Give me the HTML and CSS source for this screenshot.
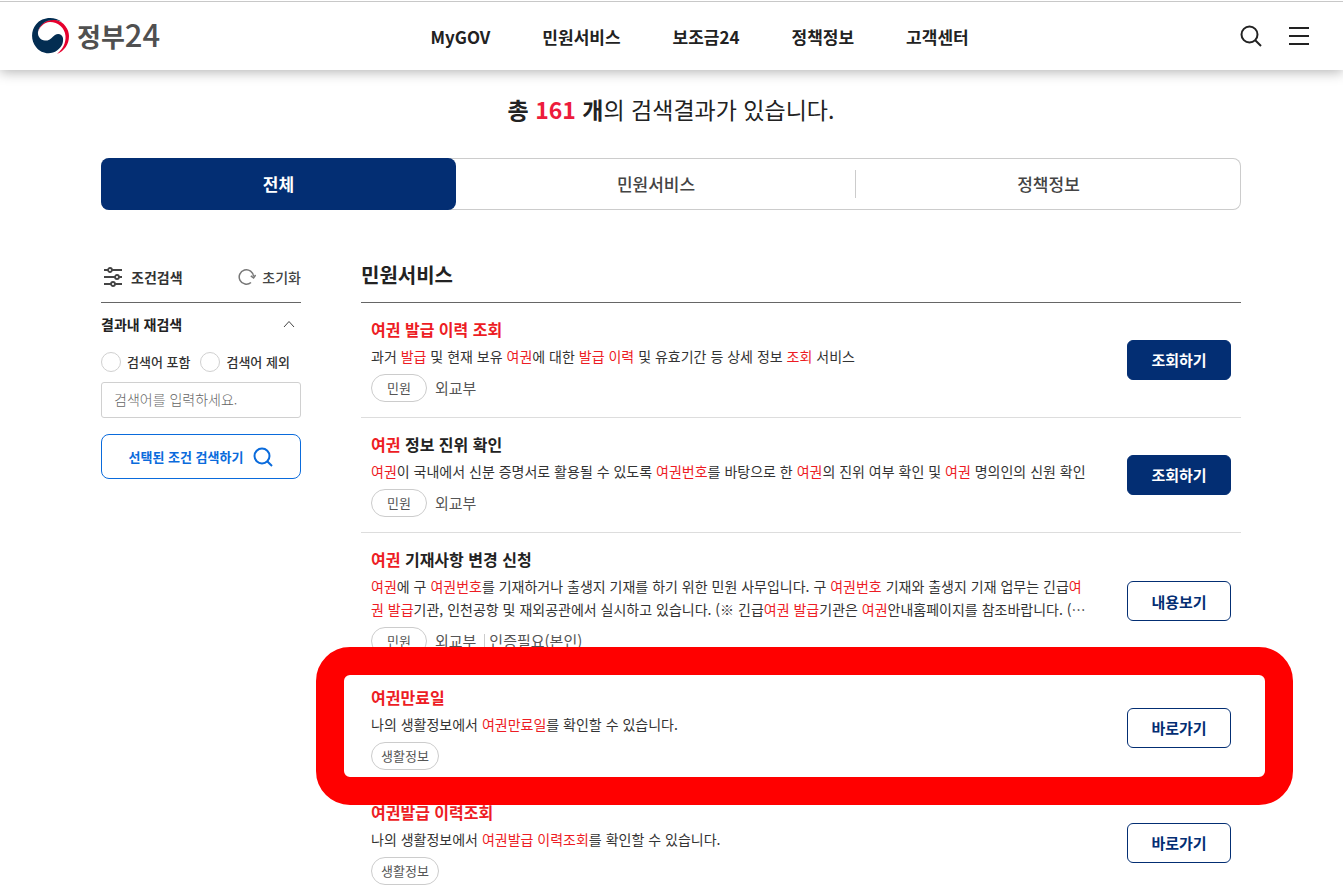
FILE: index.html
```
<!DOCTYPE html>
<html lang="ko">
<head>
    <meta charset="UTF-8">
    <meta name="viewport" content="width=device-width, initial-scale=1.0">
    <title>통합검색 | 정부24</title>
    <link rel="stylesheet" href="styles.css">
</head>
<body>
    <!-- header -->
    <header class="header">
        <a href="#" class="logo">
            <svg width="37" height="36" viewBox="0 0 37 36" aria-hidden="true">
                <path d="M6 15 C7 5 16 1 24 2 C32 4 37 11 37 18 C37 27 32 33 25 36 C31 31 34 25 33.5 18 C33 10 26 4 18 4 C12 4.5 7 9 6 15 Z" fill="#e6002d"/>
                <path d="M30 4 C22 -2 10 -1 4 6.5 C-1.5 13 -1 23 4 29 C9 36 19 37 25 32.5 C30 29 31.5 25 31 20 C30 16 26 15 23 17 C19 20 18 23 13 22.5 C8 22 5.5 18 6 14 C8 4 19 -1 30 4 Z" fill="#032d52"/>
            </svg>
            <span class="logo-text">정부<span class="logo-num">24</span></span>
        </a>
        <nav class="gnb">
            <a href="#">MyGOV</a>
            <a href="#">민원서비스</a>
            <a href="#">보조금24</a>
            <a href="#">정책정보</a>
            <a href="#">고객센터</a>
        </nav>
        <div class="util">
            <button type="button" class="icon-btn" aria-label="검색">
                <svg width="24" height="24" viewBox="0 0 24 24" fill="none" stroke="#222" stroke-width="2">
                    <circle cx="10.5" cy="10.5" r="8"/>
                    <path d="M16 16 L22 22"/>
                </svg>
            </button>
            <button type="button" class="icon-btn" aria-label="전체메뉴">
                <svg width="24" height="24" viewBox="0 0 24 24" fill="none" stroke="#222" stroke-width="2">
                    <path d="M2 4 H22 M2 12 H22 M2 20 H22"/>
                </svg>
            </button>
        </div>
    </header>

    <div class="container">
        <h1 class="result-count"><strong>총 <em>161</em> 개</strong>의 검색결과가 있습니다.</h1>

        <div class="tabs">
            <button type="button" class="tab active">전체</button>
            <button type="button" class="tab tab-service">민원서비스</button>
            <button type="button" class="tab tab-policy">정책정보</button>
        </div>

        <div class="content">
            <!-- filter -->
            <aside class="filter">
                <div class="filter-head">
                    <h2>
                        <svg width="20" height="20" viewBox="0 0 20 20" fill="none" stroke="#444" stroke-width="1.8">
                            <path d="M1 3 H5 M9 3 H19 M1 10 H12 M16 10 H19 M1 17 H8 M12 17 H19"/>
                            <circle cx="7" cy="3" r="2"/>
                            <circle cx="14" cy="10" r="2"/>
                            <circle cx="10" cy="17" r="2"/>
                        </svg>
                        조건검색
                    </h2>
                    <button type="button" class="reset">
                        <svg width="18" height="18" viewBox="0 0 18 18" fill="none" stroke="#777" stroke-width="1.5">
                            <path d="M13 14.5 A7.2 7.2 0 1 1 15.6 8.5"/>
                            <path d="M12.8 7.8 L15.6 10 L17.6 7"/>
                        </svg>
                        초기화
                    </button>
                </div>
                <button type="button" class="filter-toggle">
                    결과내 재검색
                    <svg width="12" height="8" viewBox="0 0 12 8" fill="none" stroke="#444">
                        <path d="M1 7 L6 1.5 L11 7"/>
                    </svg>
                </button>
                <div class="radios">
                    <label><input type="radio" name="again">검색어 포함</label>
                    <label><input type="radio" name="again">검색어 제외</label>
                </div>
                <input type="text" class="keyword" placeholder="검색어를 입력하세요." aria-label="검색어">
                <button type="button" class="filter-submit">
                    선택된 조건 검색하기
                    <svg width="20" height="20" viewBox="0 0 20 20" fill="none" stroke="#0a6bdc" stroke-width="2">
                        <circle cx="9" cy="9" r="7.5"/>
                        <path d="M14.2 14.2 L19 19"/>
                    </svg>
                </button>
            </aside>

            <!-- results -->
            <main class="results">
                <h2 class="results-title">민원서비스</h2>
                <ul class="list">
                    <li class="item">
                        <div class="item-body">
                            <h3><mark>여권 발급 이력 조회</mark></h3>
                            <p class="desc">과거 <mark>발급</mark> 및 현재 보유 <mark>여권</mark>에 대한 <mark>발급 이력</mark> 및 유효기간 등 상세 정보 <mark>조회</mark> 서비스</p>
                            <div class="info"><span class="tag">민원</span><span>외교부</span></div>
                        </div>
                        <button type="button" class="btn btn-fill">조회하기</button>
                    </li>
                    <li class="item">
                        <div class="item-body">
                            <h3><mark>여권</mark> 정보 진위 확인</h3>
                            <p class="desc"><mark>여권</mark>이 국내에서 신분 증명서로 활용될 수 있도록 <mark>여권번호</mark>를 바탕으로 한 <mark>여권</mark>의 진위 여부 확인 및 <mark>여권</mark> 명의인의 신원 확인</p>
                            <div class="info"><span class="tag">민원</span><span>외교부</span></div>
                        </div>
                        <button type="button" class="btn btn-fill">조회하기</button>
                    </li>
                    <li class="item">
                        <div class="item-body">
                            <h3><mark>여권</mark> 기재사항 변경 신청</h3>
                            <p class="desc"><mark>여권</mark>에 구 <mark>여권번호</mark>를 기재하거나 출생지 기재를 하기 위한 민원 사무입니다. 구 <mark>여권번호</mark> 기재와 출생지 기재 업무는 긴급<mark>여<br>권 발급</mark>기관, 인천공항 및 재외공관에서 실시하고 있습니다. (※ 긴급<mark>여권 발급</mark>기관은 <mark>여권</mark>안내홈페이지를 참조바랍니다. (…</p>
                            <div class="info"><span class="tag">민원</span><span>외교부</span><span class="auth">인증필요(본인)</span></div>
                        </div>
                        <button type="button" class="btn">내용보기</button>
                    </li>
                    <li class="item highlight">
                        <div class="item-body">
                            <h3><mark>여권만료일</mark></h3>
                            <p class="desc">나의 생활정보에서 <mark>여권만료일</mark>를 확인할 수 있습니다.</p>
                            <div class="info"><span class="tag tag-life">생활정보</span></div>
                        </div>
                        <button type="button" class="btn">바로가기</button>
                    </li>
                    <li class="item">
                        <div class="item-body">
                            <h3><mark>여권발급 이력조회</mark></h3>
                            <p class="desc">나의 생활정보에서 <mark>여권발급 이력조회</mark>를 확인할 수 있습니다.</p>
                            <div class="info"><span class="tag tag-life">생활정보</span></div>
                        </div>
                        <button type="button" class="btn">바로가기</button>
                    </li>
                </ul>
            </main>
        </div>
    </div>
</body>
</html>
```
FILE: styles.css
```
/* base */
* {
    box-sizing: border-box;
}
body {
    margin: 0;
    background: #fff;
    color: #222;
    font-family: "Noto Sans CJK KR", "Noto Sans", sans-serif;
    font-size: 14px;
}
h1, h2, h3, p, ul {
    margin: 0;
    padding: 0;
}
ul {
    list-style: none;
}
a {
    color: inherit;
    text-decoration: none;
}
button, input {
    font-family: inherit;
}
button {
    padding: 0;
    border: 0;
    background: none;
    color: inherit;
    cursor: pointer;
}
svg {
    display: block;
    flex: none;
}
mark {
    background: none;
    color: #ed1c24;
}

/* header */
.header {
    display: flex;
    justify-content: space-between;
    align-items: center;
    height: 69px;
    margin-top: 1px;
    padding: 0 32px;
    border-top: 1px solid #c8c8c8;
    box-shadow: 0 2px 12px rgba(0, 0, 0, 0.3);
    clip-path: inset(0 0 -16px 0);
}
.logo {
    display: flex;
    align-items: center;
    gap: 8px;
    color: #505050;
}
.logo-text {
    padding-bottom: 3px;
    font-size: 26px;
    font-weight: 700;
    line-height: 36px;
}
.logo-num {
    font-size: 31px;
    font-weight: 500;
}
.gnb {
    display: flex;
    gap: 52px;
    font-size: 17px;
    font-weight: 700;
}
.util {
    display: flex;
    gap: 24px;
}
.icon-btn {
    width: 24px;
    height: 24px;
}

/* layout */
.container {
    max-width: 1141px;
    margin: 0 auto;
    padding-right: 1px;
}
.content {
    display: flex;
    gap: 60px;
    margin-top: 40px;
}

.result-count {
    padding-top: 22px;
    font-size: 23px;
    font-weight: 400;
    line-height: 34px;
    text-align: center;
}
.result-count em {
    color: #ed1c3c;
    font-style: normal;
}

/* tabs */
.tabs {
    display: flex;
    height: 52px;
    margin-top: 32px;
    border-radius: 8px;
    box-shadow: inset 0 0 0 1px #ccc;
}
.tab {
    flex: 385;
    padding-bottom: 2px;
    color: #444;
    font-size: 17px;
    font-weight: 500;
}
.tab.active {
    flex: 355;
    border-radius: 8px;
    background: #032e73;
    color: #fff;
    font-weight: 700;
}
.tab-service {
    flex: 400;
    background: linear-gradient(#ccc, #ccc) right center / 1px 28px no-repeat;
}

/* filter */
.filter {
    flex: none;
    width: 200px;
}
.filter-head {
    display: flex;
    justify-content: space-between;
    align-items: center;
    height: 53px;
    padding-top: 2px;
    border-bottom: 1px solid #666;
    color: #444;
}
.filter-head h2 {
    display: flex;
    align-items: center;
    gap: 8px;
    padding-left: 2px;
    color: #333;
    font-size: 14px;
}
.reset {
    display: flex;
    align-items: center;
    gap: 6px;
    font-size: 14px;
    font-weight: 500;
}
.filter-toggle {
    display: flex;
    justify-content: space-between;
    align-items: center;
    width: 100%;
    height: 42px;
    padding-right: 6px;
    font-size: 14px;
    font-weight: 700;
}
.radios {
    display: flex;
    gap: 10px;
    padding-top: 7px;
}
.radios label {
    display: flex;
    align-items: center;
    gap: 6px;
    color: #333;
    font-size: 13px;
    font-weight: 500;
    line-height: 20px;
    white-space: nowrap;
}
.radios input {
    appearance: none;
    width: 20px;
    height: 20px;
    margin: 0;
    border: 1px solid #d0d0d0;
    border-radius: 50%;
}
.radios input:checked {
    border: 6px solid #0a6bdc;
}
.keyword {
    display: block;
    width: 100%;
    height: 36px;
    margin-top: 10px;
    padding: 0 12px 2px;
    border: 1px solid #d0d0d0;
    border-radius: 3px;
    font-size: 14px;
}
.keyword::placeholder {
    color: #666;
    font-weight: 300;
}
.filter-submit {
    display: flex;
    justify-content: center;
    align-items: center;
    gap: 10px;
    width: 100%;
    height: 45px;
    margin-top: 16px;
    border: 1px solid #0a6bdc;
    border-radius: 8px;
    color: #0a6bdc;
    font-size: 13px;
    font-weight: 700;
}

/* result list */
.results {
    flex: 1;
    min-width: 0;
}
.results-title {
    height: 53px;
    border-bottom: 1px solid #666;
    font-size: 20px;
    line-height: 50px;
}
.item {
    position: relative;
    display: flex;
    justify-content: space-between;
    align-items: center;
    gap: 24px;
    padding: 14px 10px 15px;
    border-bottom: 1px solid #ddd;
}
.item-body {
    min-width: 0;
}
.item h3 {
    font-size: 16px;
    line-height: 24px;
}
.desc {
    margin-top: 4px;
    color: #333;
    font-size: 14px;
    line-height: 23px;
}
.info {
    display: flex;
    align-items: center;
    gap: 8px;
    margin-top: 6px;
    color: #555;
    font-size: 15px;
    line-height: 26px;
}
.tag {
    padding: 0 15px;
    border: 1px solid #ccc;
    border-radius: 14px;
    font-size: 13px;
}
.tag-life {
    padding: 0 9px;
}
.auth {
    padding-left: 5px;
    background: linear-gradient(#ccc, #ccc) left center / 1px 14px no-repeat;
}
.btn {
    flex: none;
    width: 104px;
    height: 40px;
    border: 1px solid #032e73;
    border-radius: 6px;
    color: #032e73;
    font-size: 15px;
    font-weight: 700;
}
.btn-fill {
    background: #032e73;
    color: #fff;
}

/* red frame over the neighbouring rows */
.highlight::after {
    content: "";
    position: absolute;
    z-index: 1;
    top: -24px;
    right: -52px;
    bottom: -20px;
    left: -45px;
    border: 28px solid #f00;
    border-radius: 34px;
    pointer-events: none;
}
```
